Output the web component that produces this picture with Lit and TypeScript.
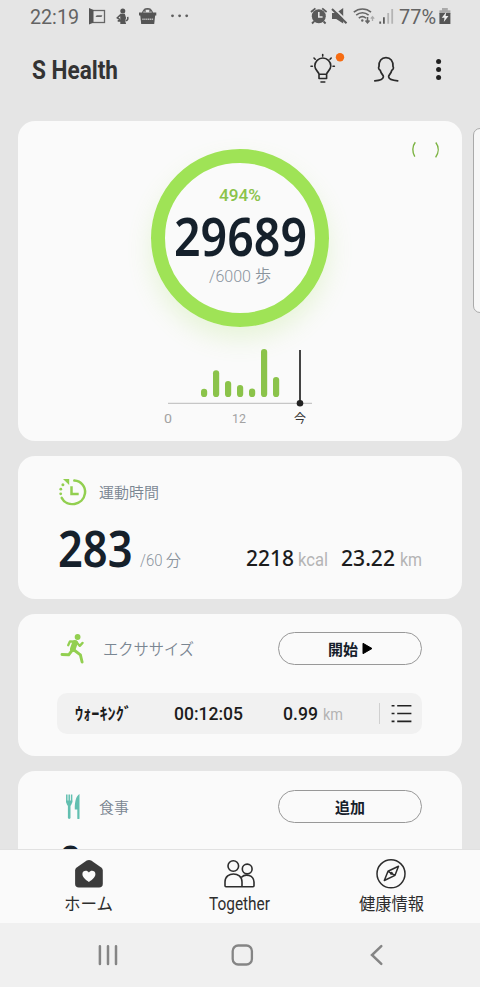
import { LitElement, html, svg, css, TemplateResult } from "lit";
import { customElement, property } from "lit/decorators.js";

/** A single line of text, condensed or stretched to a given width. */
@customElement("fit-text")
class FitText extends LitElement {
  @property() text = "";
  @property({ type: Number }) w = 40;
  @property({ type: Number }) size = 16;
  static styles = css`
    :host { display: block; flex: none; }
    svg { display: block; overflow: visible; }
    text { fill: currentColor; white-space: pre; }
  `;
  render() {
    const h = Math.round(this.size * 1.2);
    return html`<svg width=${this.w} height=${h}>
      <text x="0" y=${h / 2 + this.size * 0.36} font-size=${this.size}
        textLength=${this.w} lengthAdjust="spacingAndGlyphs">${this.text}</text>
    </svg>`;
  }
}

const t = (cls: string, text: string, w: number, size: number) =>
  html`<fit-text class=${cls} .text=${text} .w=${w} .size=${size}></fit-text>`;

const icon = (cls: string, x: number, y: number, w: number, h: number, body: TemplateResult | unknown) =>
  html`<svg class="icon ${cls}" width=${w} height=${h} viewBox="${x} ${y} ${w} ${h}" fill="none">${body}</svg>`;

const BARS = [8.3, 26.8, 16, 12, 8.6, 48, 20];

@customElement("app-root")
class AppRoot extends LitElement {
  static styles = css`
    :host {
      display: flex; flex-direction: column; position: relative;
      width: 480px; height: 987px; overflow: hidden; background: #e5e5e5;
      font-family: Roboto, "Noto Sans CJK JP", sans-serif; color: #16202b;
    }
    * { box-sizing: border-box; }
    .icon { display: block; flex: none; overflow: visible; }
    .row { display: flex; align-items: center; flex: none; }
    .push { margin-left: auto; }
    .green { color: #8bc34a; }
    .slate { color: #7a8692; font-weight: 350; }
    .pale { color: #b4b4b4; }
    .big { font-family: "Noto Sans", sans-serif; font-weight: 590; color: #15202b; }
    .num { font-family: "Noto Sans", sans-serif; font-weight: 500; color: #1c1c1c; }

    .status { height: 32px; padding: 1px 29px 0 30px; color: #636363; }
    .s1 { margin-left: 8px; } .s2 { margin-left: 10px; } .s3 { margin-left: 9px; }
    .s4 { margin-left: 13px; } .s5 { margin-left: 3px; } .s6 { margin-left: 5px; }
    .s7 { margin-left: 3px; } .s8 { margin-left: 5px; } .s9 { margin-left: 3px; }

    .head { height: 76px; padding: 0 36px 0 32px; color: #2c2c2c; }
    .title { font-weight: 700; color: #333; margin-top: -1px; }
    .profile { margin-left: 28px; } .more { margin-left: 34px; }

    .feed { flex: none; height: 741px; padding: 13px 18px 0; display: flex; flex-direction: column; gap: 15px; overflow: hidden; }
    .card { flex: none; background: #fafafa; border-radius: 17px; overflow: hidden; }
    .steps { height: 320px; display: grid; grid-template-columns: 1fr; justify-items: center; align-content: start; position: relative; }
    .paren { position: absolute; right: 22px; top: 20px; }
    .ring {
      margin-top: 28px; width: 178px; height: 178px; border-radius: 50%; border: 14px solid #9fe356;
      box-shadow: 0 12px 24px rgba(159, 227, 86, 0.2);
      display: flex; flex-direction: column; align-items: center; padding-top: 22px;
    }
    .pct { font-weight: 480; }
    .goal { margin-top: -3px; color: #8a949e; font-weight: 350; }
    .chart { margin-top: 20px; }
    .axis { width: 144px; display: flex; margin-top: 3px; color: #a2a2a2; }
    .a0 { margin-left: -4px; } .a12 { margin-left: 60px; } .now { margin: 2px 0 0 48px; color: #333; }

    .active { height: 143px; padding: 21px 40px 0; }
    .h30 { height: 30px; }
    .active .lab { margin-top: 2px; }
    .lab { margin-left: 12px; }
    .totals { height: 54px; margin-top: 14px; align-items: flex-end; }
    .v283 { margin-bottom: -3.5px; }
    .v60 { margin-left: 7px; margin-bottom: 5px; color: #8a949e; font-weight: 350; }
    .k1 { margin-bottom: 4px; } .ku { margin: 0 0 4.500px 4px; font-weight: 370; } .k2 { margin: 0 0 4px 13px; } .mu { margin: 0 0 4.500px 5px; font-weight: 370; }

    .exercise { height: 142.5px; padding: 18.5px 40px 0 39px; margin-top: -0.5px; }
    .run { margin-left: 3px; }
    .run-lab { margin: 2px 0 0 18px; }
    .pill { width: 144px; height: 33px; border: 1px solid #989898; border-radius: 17px; justify-content: center; gap: 4px; font-weight: 700; }
    .act { margin-top: 3px; }
    .log { height: 41px; margin-top: 28px; border-radius: 10px; background: #f1f1f1; padding: 0 10px 0 17px; color: #1c1c1c; font-weight: 500; }
    .kana { font-weight: 700; margin: 1px -1px 0 1px; }
    .time { margin-left: 43px; } .dist { margin-left: 40px; } .du { margin-left: 5px; font-weight: 400; }
    .sep { width: 1px; height: 21px; background: #d0d0d0; margin-left: auto; }
    .list { margin-left: 11px; }

    .food { height: 143px; padding: 19px 40px 0 39px; margin-top: -0.5px; }
    .fork { margin-left: 8px; }
    .food-lab { margin: 3px 0 0 18px; }
    .zero { margin: 11.5px 0 0 0.5px; }

    .tabs { height: 74px; background: #fafafa; border-top: 1px solid #e1e1e1; display: flex; padding: 0 13px; color: #2d2d2d; }
    .tab { flex: 1; display: flex; flex-direction: column; align-items: center; padding-top: 9px; gap: 5px; }
    .tog { margin-top: -1px; }
    .nav { height: 64px; background: #f0f0f0; padding: 0 97px 0 98px; }
    .n1 { margin-left: 112px; } .n2 { margin-left: 117px; }
    .edge { position: absolute; left: 473px; top: 128px; width: 16px; height: 185px; border: 1px solid #aaa; border-radius: 7px; background: #f7f7f7; }
  `;

  private status() {
    return html`<div class="row status">
      ${t("", "22:19", 49, 20)}
      ${icon("s1", 87, 8, 19, 17, svg`
        <rect x="91" y="10.5" width="13.5" height="12" stroke="#666" stroke-width="1.3"/>
        <path d="M89 8l4.500 2v12.500l-4.500 2z" fill="#555"/><path d="M95.500 17l1.200-1.700h5.600l-.8 1.700z" fill="#666"/>`)}
      ${icon("s2", 116, 8, 13, 17, svg`
        <circle cx="122.800" cy="11" r="2.500" fill="#555"/>
        <path d="M120 13.800h4.800l1.300 4.200-1 2.800 1 3.200h-5.800v-2.200h-2.600v-2h2.700z" fill="#555"/>
        <path d="M120.500 14.800l-3.200 3.100 3 1.800M125.500 20.800c2.500-.3 2.600-2.200 2.200-4" stroke="#555" stroke-width="1.500"/>`)}
      ${icon("s3", 138, 8, 19, 17, svg`
        <path d="M142.500 14c0-7 10-7 10 0M145 12.200v-3h5v3" stroke="#5b5b5b" stroke-width="1.300"/>
        <path d="M139 12.500h17.300v3H139z" fill="#555"/><path d="M140.200 15h15l-1 9h-13z" fill="#555"/>
        <path d="M142.300 19.300h10.800" stroke="#bbb" stroke-width="1.500" stroke-dasharray="1.400 .5"/>`)}
      ${icon("s4", 170, 8, 19, 17, svg`<g fill="#5e5e5e"><circle cx="172.500" cy="15.800" r="1.400"/><circle cx="179.600" cy="15.800" r="1.400"/><circle cx="186.700" cy="15.800" r="1.400"/></g>`)}
      ${icon("push", 309, 8, 18, 17, svg`
        <circle cx="317.800" cy="16.300" r="7" fill="#5a5a5a"/><path d="M317.800 12v5h3.800" stroke="#e5e5e5" stroke-width="1.600"/>
        <path d="M310 12l4.400-3.600M325.600 12l-4.400-3.600M313 21.500l-2 2M322.600 21.500l2 2" stroke="#5a5a5a" stroke-width="1.800"/>`)}
      ${icon("s5", 330, 8, 17, 17, svg`
        <path d="M331 13h4.200l7-5v15.500l-7-4.500h-4.200z" fill="#5a5a5a"/>
        <path d="M333 8.300L347 22" stroke="#e5e5e5" stroke-width="1.800"/><path d="M331 9L345.500 23.200" stroke="#5a5a5a" stroke-width="2"/>`)}
      ${icon("s6", 352, 8, 22, 17, svg`
        <g stroke="#666" stroke-width="1.600"><path d="M352.800 12.200c5-4.300 12.400-4.300 17.200 0M355.200 15.200c3.700-3.200 8.800-3.200 12.400 0M357.800 18.100c2.200-1.800 5-1.800 7.200 0"/>
        <path d="M366.500 17v5.500m-2-2l2 2.300 2-2.300"/></g><circle cx="361.300" cy="20.500" r="1.200" fill="#666"/>
        <path d="M371.500 21v-4m-1.700 1.700l1.700-2 1.700 2" stroke="#aaa" stroke-width="1.300"/>`)}
      ${icon("s7", 377, 8, 16, 17, svg`
        <path d="M379.200 23.800v-2.300M382.900 23.800v-6.500" stroke="#5c5c5c" stroke-width="1.800"/>
        <path d="M387.200 23.800V13M391.200 23.800V9" stroke="#b4b4b4" stroke-width="1.800"/>`)}
      ${t("s8", "77%", 37, 20)}
      ${icon("s9", 439, 8, 12, 17, svg`
        <path d="M442 8h5.800v2.300h2.600V14h-11v-3.700h2.600z" fill="#aaa"/><path d="M439.400 13h11v11h-11z" fill="#555"/>
        <path d="M446.300 12l-4.600 5.800h2.800l-.7 4.200 4.700-6h-2.900z" fill="#eee"/>`)}
    </div>`;
  }

  private header() {
    return html`<div class="row head">
      ${t("title", "S Health", 86, 25)}
      ${icon("push", 310, 53, 36, 34, svg`
        <g stroke="#2a2a2a" stroke-width="1.600" stroke-linecap="round" stroke-linejoin="round">
        <path d="M319 74.200c-.2-2.200-4.200-4.300-4.200-8.200a8 8 0 0 1 16 0c0 3.900-4 6-4.200 8.200zM319 74.200v4.300h7.600v-4.300M321 82h3.800"/>
        <path d="M322.700 54.600v1.500M314 58l1.200 1.200M331.200 58l-1.200 1.200M311 66.200h1.400M333 66.200h1.400"/></g>
        <circle cx="340" cy="57.300" r="4.200" fill="#f66c12"/>`)}
      ${icon("profile", 374, 53, 26, 34, svg`
        <path d="M375.500 80.800c4.500-.4 8.300-2 8.600-4 .2-1.700-2.200-2.500-3.200-6.600-1.800-.9-1.900-2.700-1.200-3.700-.3-5.800 2.500-8.800 7-8.800s7.300 3 7 8.800c.7 1 .6 2.800-1.200 3.700-1 4.100-3.400 4.900-3.200 6.600.3 2 4.600 3.600 9.100 4" transform="translate(-.7)" stroke="#2a2a2a" stroke-width="1.700" stroke-linecap="round" stroke-linejoin="round"/>`)}
      ${icon("more", 434, 53, 10, 34, svg`<g fill="#222"><circle cx="438.600" cy="61.400" r="2.500"/><circle cx="438.600" cy="69.500" r="2.500"/><circle cx="438.600" cy="77.600" r="2.500"/></g>`)}
    </div>`;
  }

  private steps() {
    return html`<section class="card steps">
      <div class="paren">${icon("", 411, 141, 29, 17, svg`
        <path d="M415.300 142.200c-3.200 4-3.200 10.200-.5 14.500M435.800 142.500c3.200 4.200 3.200 10-.2 14.800" stroke="#7cb342" stroke-width="1.400"/>`)}</div>
      <div class="ring">
        ${t("pct green", "494%", 42, 17)}
        ${t("big", "29689", 133, 53)}
        ${t("goal", "/6000 歩", 62, 16.8)}
      </div>
      ${icon("chart", 168, 347, 144, 60, svg`
        ${BARS.map((h, i) => svg`<rect x=${201 + i * 12} y=${397 - h} width="6.2" height=${h} rx="3.1" fill="#8bc34a"/>`)}
        <path d="M168 403.300h144" stroke="#c6c6c6" stroke-width="1.200"/>
        <path d="M300 350v53" stroke="#444" stroke-width="2"/><circle cx="300" cy="403.200" r="3.300" fill="#222"/>`)}
      <div class="axis">${t("a0", "0", 8, 13)}${t("a12", "12", 14, 13)}${t("now", "今", 12, 12)}</div>
    </section>`;
  }

  private active() {
    return html`<section class="card active">
      <div class="row h30">
        ${icon("", 58, 477, 29, 30, svg`
          <g stroke="#92cf50" stroke-width="2.500"><path d="M74.300 480.600c7 .5 11.600 6.200 10.700 12.800-1.700 12-18.300 14.500-23.300 4.500" stroke-linecap="round"/>
          <path d="M71.500 486.300v7.600h7.200"/></g>
          <path d="M63 479h6.200v6z" fill="#92cf50"/><g fill="#92cf50"><circle cx="62.900" cy="484.700" r="1.500"/><circle cx="60.800" cy="489.200" r="1.400"/><circle cx="60.700" cy="493.800" r="1.400"/></g>`)}
        ${t("slate lab", "運動時間", 60, 15.2)}
      </div>
      <div class="row totals">
        ${t("big v283", "283", 74.5, 50)}
        ${t("v60", "/60 分", 41, 16)}
        <div class="push"></div>
        ${t("num k1", "2218", 48, 22.5)}${t("pale ku", "kcal", 30, 19)}
        ${t("num k2", "23.22", 54, 22.5)}${t("pale mu", "km", 22, 19)}
      </div>
    </section>`;
  }

  private exercise() {
    return html`<section class="card exercise">
      <div class="row">
        ${icon("run", 60, 633, 25, 31, svg`
          <circle cx="77.600" cy="637" r="2.900" fill="#92cf50"/>
          <g stroke="#92cf50" stroke-linecap="round" stroke-linejoin="round"><path d="M68.200 645.300l1.800-4 6 .3 3.800 4.300 2.800-3" stroke-width="2.300"/>
          <path d="M75 642.800l-2.200 6.200" stroke-width="5.600"/><path d="M72 650.500l-3.300 4.300-6.700-.3M74 650l6.400 4.800 1.700 7.200" stroke-width="2.900"/></g>`)}
        ${t("slate run-lab", "エクササイズ", 91, 15.5)}
        <div class="push row pill">${t("act", "開始", 30, 15)}${icon("", 362, 643, 11, 13, svg`<path d="M363 644.300v10.400l9-5.200z" fill="#000" stroke="#000" stroke-linejoin="round"/>`)}</div>
      </div>
      <div class="row log">
        ${t("kana", "ｳｫｰｷﾝｸﾞ", 57, 17)}${t("time", "00:12:05", 69, 17.5)}
        ${t("dist", "0.99", 35, 17.5)}${t("pale du", "km", 20, 17)}
        <div class="sep"></div>
        ${icon("list", 391, 703, 21, 22, svg`<g stroke="#222" stroke-width="1.600"><path d="M391.600 705.700h2.900M397.200 705.700h14.200M391.600 713.500h2.900M397.200 713.500h14.200M391.600 721.400h2.900M397.200 721.400h14.200"/></g>`)}
      </div>
    </section>`;
  }

  private food() {
    return html`<section class="card food">
      <div class="row">
        ${icon("fork", 65, 793, 16, 27, svg`
          <path d="M66.800 794.500v8M69.200 794.500v8M71.600 794.500v8" stroke="#62bfb0" stroke-width="1.500"/>
          <path d="M66.100 800.500h6.200c0 3.500-1.400 4.500-1.800 5.400v12.200c0 1.100-2.600 1.100-2.600 0v-12.200c-.4-.9-1.800-1.900-1.800-5.400zM79.500 794v24.400c0 .8-2.200.8-2.200 0v-9h-2.500c-.2-7.200 1.100-13.400 4.700-15.400z" fill="#62bfb0"/>`)}
        ${t("slate food-lab", "食事", 30, 15)}
        <div class="push row pill">${t("act", "追加", 30, 15)}</div>
      </div>
      ${t("big zero", "0", 25, 50)}
    </section>`;
  }

  render() {
    return html`
      ${this.status()}${this.header()}
      <main class="feed">${this.steps()}${this.active()}${this.exercise()}${this.food()}</main>
      <div class="tabs">
        <div class="tab">${icon("", 74, 859, 30, 30, svg`
          <path d="M86.700 860.600q2.300-1.400 4.500 0l10 6.800q1.600 1.200 1.600 3v13.300q0 3.800-3.800 3.800H78.900q-3.800 0-3.800-3.800v-13.300q0-1.800 1.600-3z" fill="#3b3b3b"/>
          <path d="M88.900 882c-3.500-2.500-6.500-4.900-6.500-8 0-3.400 4.600-4.500 6.500-1.400 1.900-3.100 6.500-2 6.500 1.400 0 3.100-3 5.500-6.500 8z" fill="#fafafa"/>`)}${t("", "ホーム", 49, 17)}</div>
        <div class="tab">${icon("", 224.5, 859, 31, 30, svg`
          <g stroke="#2d2d2d" stroke-width="1.600" stroke-linejoin="round"><circle cx="233.800" cy="866" r="5.300"/><circle cx="247.700" cy="869" r="4.900"/>
          <path d="M225.500 885.800v-3.800c0-10.700 17-10.700 17 0v3.800q0 .9-1 .9h-15q-1 0-1-.9zM242 877.300c4-4.200 12.200-2 12.500 4.700v3.800q0 .9-1 .9h-11"/></g>`)}${t("tog", "Together", 61, 17.5)}</div>
        <div class="tab">${icon("", 376, 858.5, 30, 30, svg`
          <g stroke="#2d2d2d" stroke-width="1.500" stroke-linejoin="round"><circle cx="391" cy="873.300" r="14"/>
          <path d="M398.500 865.800l-3.500 9-10.700 5.200 3.700-9.200zM388 870.800l7 4"/><circle cx="391.400" cy="872.800" r=".8"/></g>`)}${t("", "健康情報", 65, 17)}</div>
      </div>
      <div class="row nav">
        ${icon("", 98, 944, 21, 22, svg`<path d="M99.900 946.300v17.600M108 946.300v17.600M116 946.300v17.600" stroke="#858585" stroke-width="2.500" stroke-linecap="round"/>`)}
        ${icon("n1", 231, 944, 23, 22, svg`<rect x="232.700" y="945.500" width="19.200" height="19" rx="5.500" stroke="#858585" stroke-width="2.300"/>`)}
        ${icon("n2", 371, 944, 12, 22, svg`<path d="M381.300 946.200l-9.300 8.800 9.300 8.800" stroke="#858585" stroke-width="2.500" stroke-linecap="round"/>`)}
      </div>
      <div class="edge"></div>`;
  }
}
